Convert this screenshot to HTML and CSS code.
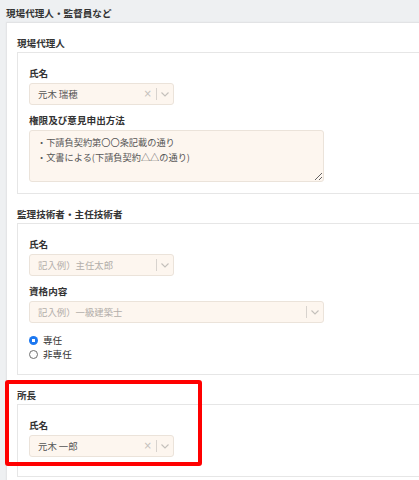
FILE: index.html
```html
<!DOCTYPE html>
<html lang="ja">
<head>
<meta charset="utf-8">
<title>現場代理人・監督員など</title>
<link rel="stylesheet" href="styles.css">
</head>
<body>
<div class="page-title">現場代理人・監督員など</div>
<div class="card">
  <section class="group">
    <div class="group-label">現場代理人</div>
    <div class="group-box group-box-first">
      <div class="field-label">氏名</div>
      <div class="select">
        <span class="select-value">元木 瑞穂</span>
        <span class="select-clear">×</span>
        <span class="select-sep"></span>
        <span class="select-arrow"><svg width="8" height="5" viewBox="0 0 8 5"><path d="M0.5 0.5 L4 4 L7.5 0.5" fill="none" stroke="#c4c0bb" stroke-width="1.1"/></svg></span>
      </div>
      <div class="field-label field-gap">権限及び意見申出方法</div>
      <textarea class="textarea">・下請負契約第〇〇条記載の通り
・文書による(下請負契約△△の通り)</textarea>
    </div>
  </section>

  <section class="group">
    <div class="group-label">監理技術者・主任技術者</div>
    <div class="group-box group-box-radio">
      <div class="field-label">氏名</div>
      <div class="select">
        <span class="select-value placeholder">記入例）主任太郎</span>
        <span class="select-sep"></span>
        <span class="select-arrow"><svg width="8" height="5" viewBox="0 0 8 5"><path d="M0.5 0.5 L4 4 L7.5 0.5" fill="none" stroke="#c4c0bb" stroke-width="1.1"/></svg></span>
      </div>
      <div class="field-label field-gap">資格内容</div>
      <div class="select select-wide">
        <span class="select-value placeholder">記入例）一級建築士</span>
        <span class="select-sep"></span>
        <span class="select-arrow"><svg width="8" height="5" viewBox="0 0 8 5"><path d="M0.5 0.5 L4 4 L7.5 0.5" fill="none" stroke="#c4c0bb" stroke-width="1.1"/></svg></span>
      </div>
      <div class="radios">
        <label class="radio-row"><span class="radio radio-on"></span>専任</label>
        <label class="radio-row"><span class="radio"></span>非専任</label>
      </div>
    </div>
  </section>

  <section class="group group-marked">
    <div class="group-label">所長</div>
    <div class="group-box group-box-last">
      <div class="field-label">氏名</div>
      <div class="select">
        <span class="select-value">元木 一郎</span>
        <span class="select-clear">×</span>
        <span class="select-sep"></span>
        <span class="select-arrow"><svg width="8" height="5" viewBox="0 0 8 5"><path d="M0.5 0.5 L4 4 L7.5 0.5" fill="none" stroke="#c4c0bb" stroke-width="1.1"/></svg></span>
      </div>
    </div>
    <div class="highlight"></div>
  </section>
</div>
</body>
</html>
```

FILE: styles.css
```css
html, body {
  margin: 0;
  padding: 0;
}
body {
  background: #eef0f2;
  font-family: "Noto Sans CJK JP", "Noto Sans", sans-serif;
  color: #333;
  overflow: hidden;
  width: 419px;
  height: 480px;
}
.page-title {
  padding: 6px 0 0 6px;
  height: 16px;
  font-size: 9.6px;
  line-height: 14px;
  font-weight: 700;
  color: #333;
}
.card {
  margin-left: 6px;
  background: #fff;
  border-top: 1px solid #e2e3e5;
  border-left: 1px solid #e4e5e7;
  padding: 13px 0 20px 10px;
  box-shadow: 0 0 2px rgba(0,0,0,0.04);
}
.group {
  margin-bottom: 13px;
}
.group-label {
  font-size: 9.6px;
  line-height: 14px;
  font-weight: 700;
  color: #333;
  margin-bottom: 2px;
}
.group-box {
  border: 1px solid #e6e6e6;
  border-right: none;
  padding: 13px 0 11px 11px;
}
.group-box-radio {
  padding-bottom: 13px;
}
.group-box-last {
  padding-bottom: 19px;
}
.field-label {
  font-size: 9.6px;
  line-height: 14px;
  font-weight: 700;
  color: #333;
  margin-bottom: 3px;
}
.field-gap {
  margin-top: 8px;
}
.select {
  box-sizing: border-box;
  width: 145px;
  height: 22px;
  background: #fdf6ef;
  border: 1px solid #ebe3da;
  border-radius: 3px;
  display: flex;
  align-items: center;
}
.select-wide {
  width: 295px;
}
.select-value {
  flex: 1;
  padding-left: 8px;
  font-size: 9.4px;
  line-height: 14px;
  color: #555;
  white-space: nowrap;
}
.placeholder {
  color: #b3aeaa;
}
.select-clear {
  font-family: "DejaVu Sans", sans-serif;
  font-size: 10px;
  line-height: 12px;
  color: #c4c0bc;
  margin-right: 4px;
}
.select-sep {
  width: 1px;
  height: 12px;
  background: #d8d3ce;
}
.select-arrow {
  width: 16px;
  display: flex;
  justify-content: center;
  align-items: center;
  height: 12px;
}
.textarea {
  display: block;
  box-sizing: border-box;
  width: 295px;
  height: 52px;
  margin: 0;
  background: #fdf6ef;
  border: 1px solid #ebe3da;
  border-radius: 3px;
  padding: 4px 7px;
  font-family: "Noto Sans CJK JP", "Noto Sans", sans-serif;
  font-size: 9.2px;
  line-height: 15px;
  color: #555;
  outline: none;
  overflow: hidden;
}
.radios {
  margin-top: 10px;
}
.radio-row {
  display: flex;
  align-items: center;
  font-size: 9.6px;
  line-height: 14px;
  color: #333;
}
.radio {
  box-sizing: border-box;
  width: 9px;
  height: 9px;
  border-radius: 50%;
  border: 1px solid #6f6f6f;
  background: #fff;
  margin-right: 5px;
}
.radio-on {
  border: none;
  background: radial-gradient(circle, #fff 0 1.6px, #1d78f0 2px);
}
.group-marked {
  position: relative;
}
.highlight {
  position: absolute;
  top: -8px;
  left: -12px;
  width: 197px;
  height: 86px;
  box-sizing: border-box;
  border: 4px solid #ff0000;
  border-radius: 3px;
  pointer-events: none;
}
```
